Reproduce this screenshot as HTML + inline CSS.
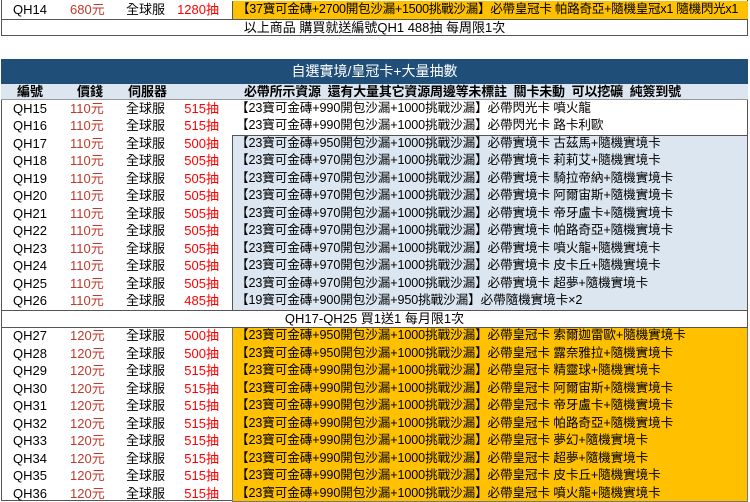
<!DOCTYPE html>
<html><head><meta charset="utf-8"><style>
*{margin:0;padding:0;box-sizing:border-box}
body{width:750px;height:500px;background:#fff;position:relative;overflow:hidden;font-family:"Liberation Sans","Noto Sans CJK TC",sans-serif;font-size:13px;color:#000}
.r{position:absolute;left:1px;width:747px;height:17.5px;line-height:17.5px;white-space:nowrap}
.r span{position:absolute;top:0}
.id{left:12px}.pr{left:69px;color:#c0392b}.sv{left:125px}.dr{right:529px;color:#ff0000}
.c{left:231px;right:0;padding-left:4px;font-size:12.6px;letter-spacing:-0.1px}
.y{background:#ffc000}
.b{background:#dce6f1}
.bl{position:absolute;border:1px solid #555}
</style></head><body>
<div style="position:absolute;left:1px;top:0;width:747px;height:36px;border:1px solid #555;border-top:none"></div>
<div class="r" style="top:1px"><span class="id">QH14</span><span class="pr">680元</span><span class="sv">全球服</span><span class="dr">1280抽</span><span class="c y" style="border-left:1px solid #555;height:18px;letter-spacing:-0.3px">【37寶可金磚+2700開包沙漏+1500挑戰沙漏】必帶皇冠卡 帕路奇亞+隨機皇冠x1 隨機閃光x1</span></div>
<div style="position:absolute;left:1px;top:19px;width:747px;height:1px;background:#555"></div>
<div class="r" style="top:19px;text-align:center">以上商品 購買就送編號QH1 488抽 每周限1次</div>

<div style="position:absolute;left:1px;top:59px;width:747px;height:442px;border:1px solid #555"></div>
<div style="position:absolute;left:1px;top:59px;width:747px;height:25px;background:#1f4e79;color:#fff;text-align:center;line-height:25px;font-size:14px">自選實境/皇冠卡+大量抽數</div>
<div class="r" style="top:84px;height:16px;line-height:16px;background:#dce6f1;font-weight:bold;border-bottom:1px solid #999"><span style="left:16px">編號</span><span style="left:76px">價錢</span><span style="left:127px">伺服器</span><span style="left:243px;letter-spacing:-0.2px">必帶所示資源&nbsp; 還有大量其它資源周邊等未標註&nbsp; 關卡未動&nbsp; 可以挖礦&nbsp; 純簽到號</span></div>

<div class="bl b" style="left:232px;top:134.5px;width:516px;height:176px"></div>
<div class="bl y" style="left:232px;top:327px;width:516px;height:175px;border-color:#777"></div>
<div style="position:absolute;left:1px;top:309.5px;width:747px;height:1px;background:#555"></div>
<div style="position:absolute;left:1px;top:327px;width:747px;height:1px;background:#555"></div>

<div class="r" style="top:99.5px"><span class="id">QH15</span><span class="pr">110元</span><span class="sv">全球服</span><span class="dr">515抽</span><span class="c">【23寶可金磚+990開包沙漏+1000挑戰沙漏】必帶閃光卡 噴火龍</span></div>
<div class="r" style="top:117px"><span class="id">QH16</span><span class="pr">110元</span><span class="sv">全球服</span><span class="dr">515抽</span><span class="c">【23寶可金磚+990開包沙漏+1000挑戰沙漏】必帶閃光卡 路卡利歐</span></div>
<div class="r" style="top:134.5px"><span class="id">QH17</span><span class="pr">110元</span><span class="sv">全球服</span><span class="dr">500抽</span><span class="c">【23寶可金磚+950開包沙漏+1000挑戰沙漏】必帶實境卡 古茲馬+隨機實境卡</span></div>
<div class="r" style="top:152px"><span class="id">QH18</span><span class="pr">110元</span><span class="sv">全球服</span><span class="dr">505抽</span><span class="c">【23寶可金磚+970開包沙漏+1000挑戰沙漏】必帶實境卡 莉莉艾+隨機實境卡</span></div>
<div class="r" style="top:169.5px"><span class="id">QH19</span><span class="pr">110元</span><span class="sv">全球服</span><span class="dr">505抽</span><span class="c">【23寶可金磚+970開包沙漏+1000挑戰沙漏】必帶實境卡 騎拉帝納+隨機實境卡</span></div>
<div class="r" style="top:187px"><span class="id">QH20</span><span class="pr">110元</span><span class="sv">全球服</span><span class="dr">505抽</span><span class="c">【23寶可金磚+970開包沙漏+1000挑戰沙漏】必帶實境卡 阿爾宙斯+隨機實境卡</span></div>
<div class="r" style="top:204.5px"><span class="id">QH21</span><span class="pr">110元</span><span class="sv">全球服</span><span class="dr">505抽</span><span class="c">【23寶可金磚+970開包沙漏+1000挑戰沙漏】必帶實境卡 帝牙盧卡+隨機實境卡</span></div>
<div class="r" style="top:222px"><span class="id">QH22</span><span class="pr">110元</span><span class="sv">全球服</span><span class="dr">505抽</span><span class="c">【23寶可金磚+970開包沙漏+1000挑戰沙漏】必帶實境卡 帕路奇亞+隨機實境卡</span></div>
<div class="r" style="top:239.5px"><span class="id">QH23</span><span class="pr">110元</span><span class="sv">全球服</span><span class="dr">505抽</span><span class="c">【23寶可金磚+970開包沙漏+1000挑戰沙漏】必帶實境卡 噴火龍+隨機實境卡</span></div>
<div class="r" style="top:257px"><span class="id">QH24</span><span class="pr">110元</span><span class="sv">全球服</span><span class="dr">505抽</span><span class="c">【23寶可金磚+970開包沙漏+1000挑戰沙漏】必帶實境卡 皮卡丘+隨機實境卡</span></div>
<div class="r" style="top:274.5px"><span class="id">QH25</span><span class="pr">110元</span><span class="sv">全球服</span><span class="dr">505抽</span><span class="c">【23寶可金磚+970開包沙漏+1000挑戰沙漏】必帶實境卡 超夢+隨機實境卡</span></div>
<div class="r" style="top:292px"><span class="id">QH26</span><span class="pr">110元</span><span class="sv">全球服</span><span class="dr">485抽</span><span class="c">【19寶可金磚+900開包沙漏+950挑戰沙漏】必帶隨機實境卡×2</span></div>
<div class="r" style="top:309.5px;text-align:center">QH17-QH25 買1送1 每月限1次</div>
<div class="r" style="top:327px"><span class="id">QH27</span><span class="pr">120元</span><span class="sv">全球服</span><span class="dr">500抽</span><span class="c">【23寶可金磚+950開包沙漏+1000挑戰沙漏】必帶皇冠卡 索爾迦雷歐+隨機實境卡</span></div>
<div class="r" style="top:344.5px"><span class="id">QH28</span><span class="pr">120元</span><span class="sv">全球服</span><span class="dr">500抽</span><span class="c">【23寶可金磚+950開包沙漏+1000挑戰沙漏】必帶皇冠卡 露奈雅拉+隨機實境卡</span></div>
<div class="r" style="top:362px"><span class="id">QH29</span><span class="pr">120元</span><span class="sv">全球服</span><span class="dr">515抽</span><span class="c">【23寶可金磚+990開包沙漏+1000挑戰沙漏】必帶皇冠卡 精靈球+隨機實境卡</span></div>
<div class="r" style="top:379.5px"><span class="id">QH30</span><span class="pr">120元</span><span class="sv">全球服</span><span class="dr">515抽</span><span class="c">【23寶可金磚+990開包沙漏+1000挑戰沙漏】必帶皇冠卡 阿爾宙斯+隨機實境卡</span></div>
<div class="r" style="top:397px"><span class="id">QH31</span><span class="pr">120元</span><span class="sv">全球服</span><span class="dr">515抽</span><span class="c">【23寶可金磚+990開包沙漏+1000挑戰沙漏】必帶皇冠卡 帝牙盧卡+隨機實境卡</span></div>
<div class="r" style="top:414.5px"><span class="id">QH32</span><span class="pr">120元</span><span class="sv">全球服</span><span class="dr">515抽</span><span class="c">【23寶可金磚+990開包沙漏+1000挑戰沙漏】必帶皇冠卡 帕路奇亞+隨機實境卡</span></div>
<div class="r" style="top:432px"><span class="id">QH33</span><span class="pr">120元</span><span class="sv">全球服</span><span class="dr">515抽</span><span class="c">【23寶可金磚+990開包沙漏+1000挑戰沙漏】必帶皇冠卡 夢幻+隨機實境卡</span></div>
<div class="r" style="top:449.5px"><span class="id">QH34</span><span class="pr">120元</span><span class="sv">全球服</span><span class="dr">515抽</span><span class="c">【23寶可金磚+990開包沙漏+1000挑戰沙漏】必帶皇冠卡 超夢+隨機實境卡</span></div>
<div class="r" style="top:467px"><span class="id">QH35</span><span class="pr">120元</span><span class="sv">全球服</span><span class="dr">515抽</span><span class="c">【23寶可金磚+990開包沙漏+1000挑戰沙漏】必帶皇冠卡 皮卡丘+隨機實境卡</span></div>
<div class="r" style="top:484.5px"><span class="id">QH36</span><span class="pr">120元</span><span class="sv">全球服</span><span class="dr">515抽</span><span class="c">【23寶可金磚+990開包沙漏+1000挑戰沙漏】必帶皇冠卡 噴火龍+隨機實境卡</span></div>
</body></html>
